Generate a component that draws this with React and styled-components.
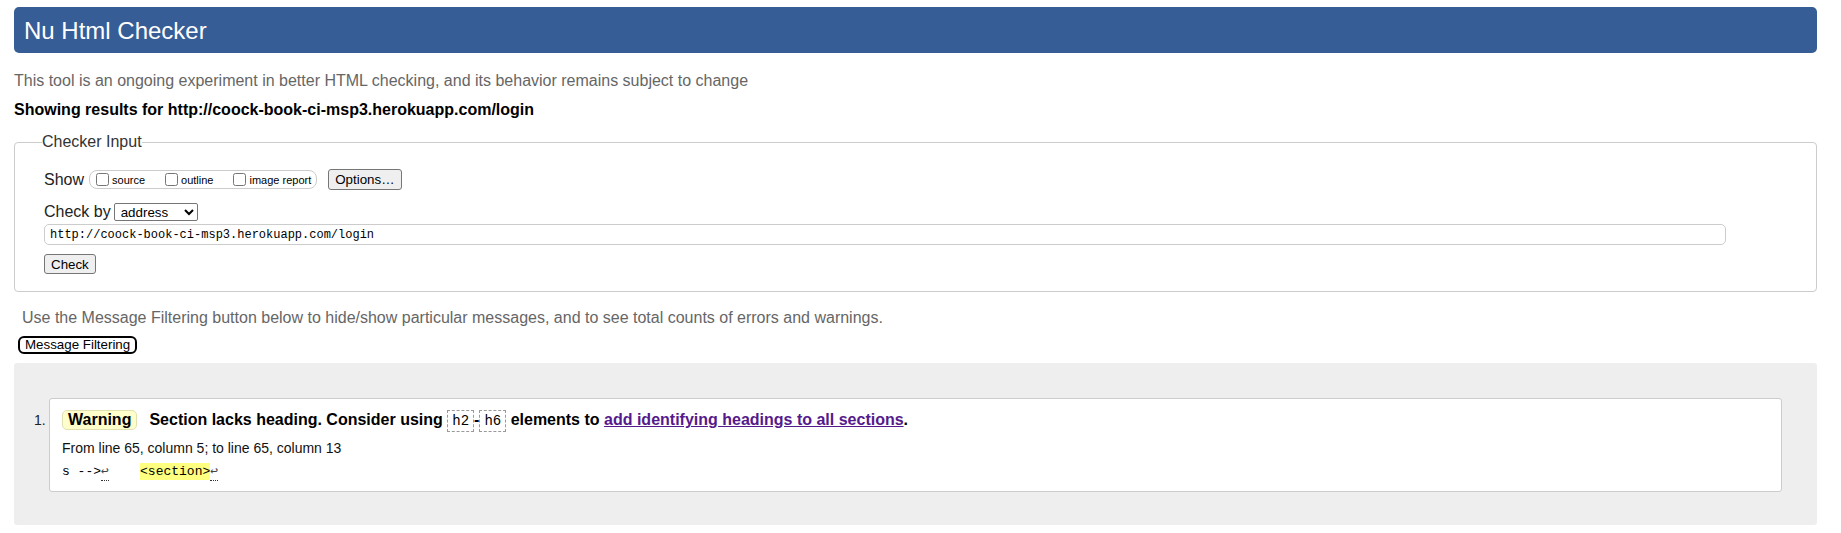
import styled, { createGlobalStyle } from "styled-components";

const GlobalStyle = createGlobalStyle`
  html, body {
    margin: 0;
    background: #fff;
  }
  body {
    font-family: "Liberation Sans", Arial, Helvetica, sans-serif;
    font-size: 16px;
    color: #000;
  }
`;

const Page = styled.div`
  padding: 7px 24px 8px 14px;
`;

const Title = styled.h1`
  margin: 0;
  padding: 10px 10px 8px;
  background: #365d95;
  color: #fff;
  font-size: 24px;
  line-height: 28px;
  font-weight: normal;
  border-radius: 5px;
`;

const Intro = styled.p`
  margin: 19px 0 0;
  color: #666;
  line-height: 18px;
`;

const ResultsFor = styled.p`
  margin: 11px 0 0;
  font-weight: bold;
  line-height: 18px;
`;

const Fieldset = styled.fieldset`
  margin: 14px 0 0;
  padding: 18px 29px 17px;
  border: 1px solid #ccc;
  border-radius: 4px;
  min-width: 0;
`;

const Legend = styled.legend`
  padding: 0;
  margin-left: -2px;
  color: #333;
  font-size: 16px;
  line-height: 18px;
`;

const Row = styled.div`
  display: flex;
  align-items: center;
  height: ${(p) => p.$h}px;
  margin-top: ${(p) => p.$mt || 0}px;
  color: #222;
  line-height: 18px;
`;

const CheckGroup = styled.span`
  display: inline-flex;
  align-items: center;
  box-sizing: border-box;
  height: 19px;
  margin-left: 5px;
  padding: 0 5px 0 2px;
  border: 1px solid #ccc;
  border-radius: 8px;
`;

const CheckLabel = styled.label`
  display: inline-flex;
  align-items: center;
  font-size: 11px;
  color: #000;

  & + & {
    margin-left: 16px;
  }

  input {
    width: 13px;
    height: 13px;
    margin: 0 3px 0 4px;
  }
`;

const Button = styled.button`
  box-sizing: border-box;
  height: ${(p) => p.$h || 20}px;
  margin-left: ${(p) => p.$ml || 0}px;
  padding: 0 6px;
  font-family: "Liberation Sans", Arial, sans-serif;
  font-size: 13.33px;
  color: #000;
  background: #efefef;
  border: 1px solid #767676;
  border-radius: 3px;
`;

const Select = styled.select`
  box-sizing: border-box;
  width: 84px;
  height: 18px;
  margin-left: 3px;
  padding: 0 2px;
  font-family: "Liberation Sans", Arial, sans-serif;
  font-size: 13.33px;
  color: #000;
  background: #fff;
  border: 1px solid #767676;
  border-radius: 2px;
`;

const UrlInput = styled.input`
  display: block;
  box-sizing: border-box;
  width: 96.5%;
  height: 21px;
  margin-top: 3px;
  padding: 0 5px;
  font-family: "Liberation Mono", "DejaVu Sans Mono", monospace;
  font-size: 12px;
  color: #000;
  border: 1px solid #ccc;
  border-radius: 5px;
`;

const CheckRow = styled.div`
  margin-top: 9px;
  display: flex;
`;

const FilterNote = styled.p`
  margin: 17px 0 0 8px;
  color: #666;
  line-height: 18px;
`;

const FilterButton = styled.button`
  display: block;
  box-sizing: border-box;
  height: 18px;
  margin: 9px 0 0 4px;
  padding: 0 5px;
  font-family: "Liberation Sans", Arial, sans-serif;
  font-size: 13.33px;
  line-height: 14px;
  color: #000;
  background: #fff;
  border: 2px solid #000;
  border-radius: 6px;
`;

const Results = styled.div`
  margin-top: 9px;
  padding: 35px 35px 33px 20px;
  background: #eee;
  border-radius: 3px;
`;

const Entry = styled.div`
  display: flex;
  align-items: baseline;
`;

const Number = styled.span`
  width: 15px;
  flex: none;
  font-size: 14px;
  line-height: 16px;
  color: #222;
`;

const Message = styled.div`
  flex: 1;
  padding: 10px 12px 9px;
  background: #fff;
  border: 1px solid #ccc;
  border-radius: 3px;
`;

const MessageLine = styled.p`
  margin: 0;
  font-weight: bold;
  line-height: 22px;
`;

const Badge = styled.strong`
  display: inline-block;
  margin-right: 12px;
  padding: 0 5px;
  line-height: normal;
  background: #ffffcc;
  border: 1px solid #e0e0b0;
  border-radius: 5px;
`;

const Code = styled.code`
  padding: 2px 4px;
  font-family: "Liberation Mono", "DejaVu Sans Mono", monospace;
  font-size: 14px;
  font-weight: normal;
  border: 1px dashed #999;
`;

const Link = styled.a`
  color: #551a8b;
  text-decoration: underline;
`;

const Location = styled.p`
  margin: 8px 0 0;
  font-size: 14px;
  line-height: 16px;
  color: #111;
`;

const Extract = styled.p`
  margin: 6px 0 0;
  font-family: "Liberation Mono", "DejaVu Sans Mono", monospace;
  font-size: 13px;
  line-height: 20px;
  white-space: pre;
`;

const Mark = styled.b`
  padding: 1px 0;
  font-weight: normal;
  background: #ffff80;
`;

const Lf = styled.span`
  padding-bottom: 1px;
  color: #444;
  border-bottom: 1px dotted #333;
`;

export default function App() {
  const url = "http://coock-book-ci-msp3.herokuapp.com/login";

  return (
    <>
      <GlobalStyle />
      <Page>
        <Title>Nu Html Checker</Title>
        <Intro>
          This tool is an ongoing experiment in better HTML checking, and its
          behavior remains subject to change
        </Intro>
        <ResultsFor>Showing results for {url}</ResultsFor>

        <Fieldset>
          <Legend>Checker Input</Legend>
          <Row $h={21}>
            <span>Show</span>
            <CheckGroup>
              <CheckLabel>
                <input type="checkbox" />
                source
              </CheckLabel>
              <CheckLabel>
                <input type="checkbox" />
                outline
              </CheckLabel>
              <CheckLabel>
                <input type="checkbox" />
                image report
              </CheckLabel>
            </CheckGroup>
            <Button $h={21} $ml={11}>
              Options…
            </Button>
          </Row>
          <Row $h={18} $mt={13}>
            <span>Check by</span>
            <Select defaultValue="address">
              <option value="address">address</option>
              <option value="file">file upload</option>
              <option value="text">text input</option>
            </Select>
          </Row>
          <UrlInput type="url" defaultValue={url} />
          <CheckRow>
            <Button>Check</Button>
          </CheckRow>
        </Fieldset>

        <FilterNote>
          Use the Message Filtering button below to hide/show particular
          messages, and to see total counts of errors and warnings.
        </FilterNote>
        <FilterButton>Message Filtering</FilterButton>

        <Results>
          <Entry>
            <Number>1.</Number>
            <Message>
              <MessageLine>
                <Badge>Warning</Badge>
                Section lacks heading. Consider using <Code>h2</Code>-
                <Code>h6</Code> elements to{" "}
                <Link href="#">add identifying headings to all sections</Link>.
              </MessageLine>
              <Location>From line 65, column 5; to line 65, column 13</Location>
              <Extract>
                {"s -->"}
                <Lf>↩</Lf>
                {"    "}
                <Mark>{"<section>"}</Mark>
                <Lf>↩</Lf>
              </Extract>
            </Message>
          </Entry>
        </Results>
      </Page>
    </>
  );
}
